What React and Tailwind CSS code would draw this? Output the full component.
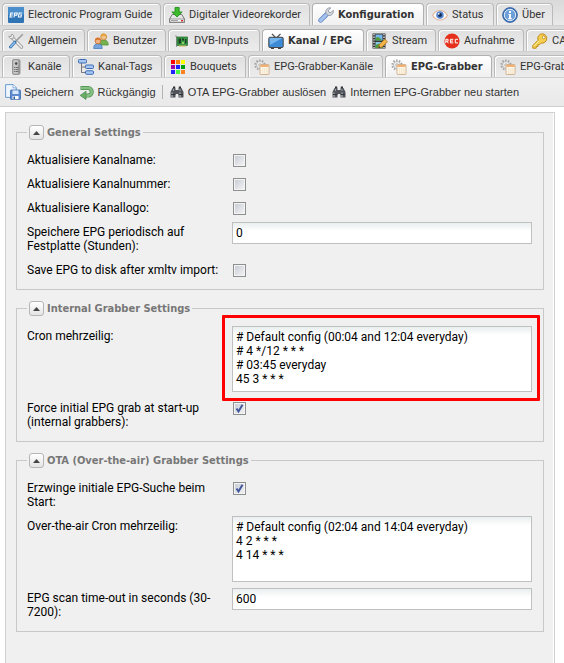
import React from "react";
import clsx from "clsx";

function Icon({ children }) {
  return (
    <svg viewBox="0 0 16 16" className="h-4 w-4 shrink-0" aria-hidden="true">
      {children}
    </svg>
  );
}

function EpgIcon() {
  return (
    <Icon>
      <rect width="16" height="16" rx="1" fill="#2f74b5" />
      <rect width="16" height="8" rx="1" fill="#4a8fcc" />
      <g fill="none" stroke="#fff" strokeWidth="1.1">
        <path d="M5.3 6H2.8L2 10h2.5M2.6 8h2.2" />
        <path d="M6 10.4L6.8 6h2.4l-.4 2.2H6.5" />
        <path d="M14 6h-2.8l-.8 4H13l.4-2h-1.2" />
      </g>
    </Icon>
  );
}

function DriveIcon() {
  return (
    <Icon>
      <path d="M3.2 7.5h9.6l2.7 4.5v3.5H.5V12z" fill="#e6e6e6" stroke="#777" strokeWidth="1" />
      <path d="M.8 12h14.4v3.2H.8z" fill="#f8f8f8" stroke="#777" strokeWidth=".7" />
      <path d="M2 13.6h7" stroke="#999" strokeWidth="1" />
      <rect x="12" y="13" width="2" height="1.4" fill="#d22" />
      <path d="M6 .5h4.2V5h3L8 10 2.8 5H6z" fill="#3dbb2c" stroke="#1c8a18" strokeWidth=".8" />
    </Icon>
  );
}

function WrenchIcon() {
  return (
    <Icon>
      <path d="M2.6 13.4L8.500 7.500" stroke="#5f86c4" strokeWidth="4.600" strokeLinecap="round" />
      <path d="M2.6 13.4L8 8" stroke="#a6c3ee" strokeWidth="3" strokeLinecap="round" />
      <path
        d="M12.9.9a4.2 4.2 0 0 0-5 5.3L10 8.400a4.2 4.2 0 0 0 5.3-5.1l-2.500 2.300-2-.4-.4-2z"
        fill="#d3d7de"
        stroke="#8a93a2"
        strokeWidth=".8"
      />
    </Icon>
  );
}

function EyeIcon() {
  return (
    <Icon>
      <path d="M.5 8.5C3 4 6 3.500 8 3.500s5.200.8 7.500 5C13 12.200 10.500 13 8 13S3 12.200.5 8.500z" fill="#fff" stroke="#e0b49c" strokeWidth="1.2" />
      <circle cx="8" cy="8" r="3.800" fill="#5787d0" />
      <circle cx="8" cy="8" r="1.900" fill="#16284f" />
      <circle cx="6.800" cy="6.800" r=".9" fill="#fff" />
    </Icon>
  );
}

function InfoIcon() {
  return (
    <Icon>
      <circle cx="8" cy="8" r="7.4" fill="#3f74b8" stroke="#2c5e9e" strokeWidth=".8" />
      <circle cx="8" cy="8" r="5.700" fill="#6c9fd8" stroke="#e4effb" strokeWidth="1" />
      <path d="M7 4h2v2H7zM6.500 7H9v4h.8v1.200H6.300V11H7V8.100h-.5z" fill="#fff" />
    </Icon>
  );
}

function ToolsIcon() {
  return (
    <Icon>
      <path d="M13.500 14L4.500 5" stroke="#8e8e8e" strokeWidth="3.200" strokeLinecap="round" />
      <path d="M13.500 14L4.500 5" stroke="#ececec" strokeWidth="1.800" strokeLinecap="round" />
      <path d="M.8 3.200l2.200.3L3.800 1a3 3 0 0 1 1.700 4.300A3 3 0 0 1 .8 3.200z" fill="#e6e6e6" stroke="#949494" strokeWidth=".8" />
      <path d="M14.800 1.200L7 9" stroke="#9a9a9a" strokeWidth="1.500" />
      <path d="M7 9l-4.500 5" stroke="#3976b4" strokeWidth="3" strokeLinecap="round" />
      <path d="M6.500 9.500l-3.800 4.200" stroke="#96c6ed" strokeWidth="1.300" strokeLinecap="round" />
    </Icon>
  );
}

function UsersIcon() {
  return (
    <Icon>
      <path d="M6.500 12c0-4 1.600-5 4.200-5s4.500 1.300 4.500 5z" fill="#75b34c" stroke="#4f8831" strokeWidth=".7" />
      <circle cx="10.700" cy="4" r="3" fill="#f1c088" stroke="#bf7c29" strokeWidth=".7" />
      <path d="M7.600 3.700C7.700.7 9 .4 10.700.4s3 .8 3.100 3.300c-1.500-1.300-4-1.500-6.200 0z" fill="#e2a33c" />
      <path d="M.7 15.500c0-3.500 1.500-4.800 4.200-4.800s4.300 1.300 4.300 4.800z" fill="#77a5df" stroke="#3e71b0" strokeWidth=".7" />
      <circle cx="5" cy="8" r="2.900" fill="#f3b282" stroke="#b95f21" strokeWidth=".7" />
      <path d="M2 7.700C2.100 5.200 3.500 4.600 5 4.600s2.900.8 3 3.100c-1.500-1.200-4-1.300-6 0z" fill="#d9762b" />
    </Icon>
  );
}

function CardIcon() {
  return (
    <Icon>
      <path d="M1 3h1.500v11" fill="none" stroke="#9a9a9a" strokeWidth="1" />
      <rect x="3" y="4" width="10.500" height="8.500" fill="#3a9a45" stroke="#1f6a2c" strokeWidth=".7" />
      <path d="M4.500 5.500H7v5H4.500zM8 5.500h2v2H8zM11 6h1.500v4.500H11z" fill="#1c3f24" />
      <path d="M8 9h2v2H8z" fill="#8cd067" />
      <path d="M5 13h7" stroke="#cfc06a" strokeWidth="1.200" />
    </Icon>
  );
}

function TvIcon() {
  return (
    <Icon>
      <path d="M4 .8l3.500 3.700M12.500.8L9 4.500" stroke="#4b4b4b" strokeWidth="1.200" />
      <rect x=".8" y="4.300" width="14.400" height="10.200" rx="1" fill="#3d8bd6" stroke="#474747" strokeWidth="1" />
      <path d="M1.600 5.100h12.800L2 12z" fill="#76b5ec" />
      <path d="M3 15.500h3M10 15.500h3" stroke="#444" strokeWidth="1" />
    </Icon>
  );
}

function StreamIcon() {
  return (
    <Icon>
      <rect x=".5" y=".5" width="13" height="15" fill="#353535" />
      <path d="M2 1v14M12 1v14" stroke="#eee" strokeWidth="1.300" strokeDasharray="1.300 1.300" />
      <rect x="3.500" y="1.500" width="7" height="6" fill="#75b4e7" />
      <path d="M3.500 7.500V5.200L6 3.700l4.500 3.800z" fill="#4f9c3c" />
      <rect x="3.500" y="9" width="7" height="6" fill="#8cc5ee" />
      <path d="M3.500 15v-3L7 10.500l3.500 2V15z" fill="#4f9c3c" />
      <path d="M6.500 15l.8-3.500 5.500-5.300 2.700 2.600L10 14z" fill="#f2b445" stroke="#a66a18" strokeWidth=".7" />
      <path d="M6.500 15l.5-2 1.400 1.500z" fill="#333" />
    </Icon>
  );
}

function RecIcon() {
  return (
    <Icon>
      <circle cx="8" cy="8" r="7.600" fill="#e5301c" />
      <g fill="none" stroke="#fff" strokeWidth="1">
        <path d="M1.800 10.200V6.300h2.300v1.900H1.800M3 8.200l1.300 2" />
        <path d="M9.300 6.300H6.400v3.600h2.900M6.400 8.100H9" />
        <path d="M14 6.300h-2.700v3.600H14" />
      </g>
    </Icon>
  );
}

function KeyIcon() {
  return (
    <Icon>
      <path
        d="M10.500.8a4.700 4.700 0 0 0-4.400 6.400L.8 12.500v2.700h3.400v-1.800H6v-1.800h1.700l1.500-1.500A4.700 4.700 0 1 0 10.500.8z"
        fill="#f6cf4e"
        stroke="#c18c1c"
        strokeWidth="1"
      />
      <circle cx="11.700" cy="4.300" r="1.400" fill="#fff" stroke="#b98318" strokeWidth=".8" />
      <path d="M2 13l5-5" stroke="#fff0a8" strokeWidth="1" />
    </Icon>
  );
}

function RemoteIcon() {
  return (
    <Icon>
      <rect x="4.500" y=".5" width="7.500" height="15" rx="1.500" fill="#9c9c9c" stroke="#8a8a8a" strokeWidth=".8" />
      <rect x="5.300" y="1.200" width="4.500" height="13.500" fill="#c9c9c9" />
      <circle cx="8.200" cy="4.500" r="1.900" fill="#555" stroke="#eee" strokeWidth=".7" />
      <path d="M6.300 8.500h4M6.300 10.500h4M6.300 12.500h4" stroke="#555" strokeWidth="1" strokeDasharray="1 .5" />
    </Icon>
  );
}

function TagsIcon() {
  return (
    <Icon>
      <path d="M3.500 4v9.500H8M3.500 8H8" fill="none" stroke="#777" strokeWidth="1" />
      <g fill="#a7c7f3" stroke="#3e6cb4" strokeWidth="1">
        <rect x=".5" y=".5" width="8" height="3.500" rx="1" />
        <rect x="7.500" y="6" width="8" height="3.500" rx="1" />
        <rect x="7.500" y="11.800" width="8" height="3.500" rx="1" />
      </g>
    </Icon>
  );
}

function BouquetsIcon() {
  return (
    <Icon>
      <path d="M1 1h4v4H1z" fill="#f00" />
      <path d="M6 1h4v4H6z" fill="#ff8000" />
      <path d="M11 1h4v4h-4z" fill="#ff0" />
      <path d="M1 6h4v4H1z" fill="#a000a8" />
      <path d="M6 6h4v4H6z" fill="#1a22ff" />
      <path d="M11 6h4v4h-4z" fill="#009f10" />
      <path d="M1 11h4v4H1z" fill="#2222ff" />
      <path d="M6 11h4v4H6z" fill="#4bfa3c" />
      <path d="M11 11h4v4h-4z" fill="#ff8020" />
    </Icon>
  );
}

function GrabberIcon() {
  return (
    <Icon>
      <circle cx="6" cy="6" r="4.700" fill="none" stroke="#a0a0a0" strokeWidth="1.800" strokeDasharray="1.500 1.450" />
      <circle cx="6" cy="6" r="3.500" fill="#f4f4f4" stroke="#a8a8a8" strokeWidth=".8" />
      <circle cx="6" cy="6" r="1.300" fill="#fff" stroke="#999" strokeWidth=".7" />
      <rect x="6" y="5.500" width="9" height="10" rx=".6" fill="#fff8ea" stroke="#c9a37e" strokeWidth=".8" />
      <path d="M6.400 5.900h8.200V8H6.400z" fill="#efb176" />
      <path d="M8 10h5.500M8 12h5.500M8 14h5.500" stroke="#e8d5b4" strokeWidth="1" strokeDasharray="1.300 .8" />
    </Icon>
  );
}

function SaveIcon() {
  return (
    <Icon>
      <path d="M.6.6h7.700l3 3v9.800H.6z" fill="#eef5fd" stroke="#6c9bcf" strokeWidth="1" />
      <path d="M8 .6v3.200h3.300" fill="#fff" stroke="#6c9bcf" strokeWidth=".8" />
      <rect x="5.500" y="6" width="10" height="9.500" rx=".7" fill="#5d8ad0" stroke="#3b69ad" strokeWidth=".8" />
      <path d="M7.500 6.400h6v3.600h-6z" fill="#d8e8fa" />
      <path d="M7.500 12h6v3.200h-6z" fill="#fff" />
      <path d="M8.500 12.500H10V15H8.500z" fill="#285597" />
    </Icon>
  );
}

function UndoIcon() {
  return (
    <Icon>
      <path d="M1.500 4H9a3.800 3.800 0 0 1 0 7.600H7" fill="none" stroke="#4b8f4c" strokeWidth="4" />
      <path d="M2 4h7a3.800 3.800 0 0 1 0 7.600H6" fill="none" stroke="#86bf83" strokeWidth="2.600" />
      <path d="M7 7.200v8.300l-5.800-4.100z" fill="#6cad69" stroke="#4b8f4c" strokeWidth=".8" />
    </Icon>
  );
}

function BinocularsIcon() {
  return (
    <Icon>
      <path d="M3.500 4h3v2h3V4h3l2 4v5.500H9.500V10h-3v3.500h-5V8z" fill="#50545a" />
      <path d="M4 3.200h2.200M9.800 3.200H12" stroke="#303338" strokeWidth="1.400" />
      <path d="M3 8.500V13M11 8.500V13" stroke="#b0b5bb" strokeWidth="1.200" />
      <path d="M4.500 5v2M11 5v2" stroke="#9aa0a6" strokeWidth="1" />
      <path d="M2 10.500h4.500M9.500 10.500H14" stroke="#303338" strokeWidth="1" />
    </Icon>
  );
}

const mainTabs = [
  { label: "Electronic Program Guide", icon: EpgIcon, width: "w-[159px]" },
  { label: "Digitaler Videorekorder", icon: DriveIcon, width: "w-[147px]" },
  { label: "Konfiguration", icon: WrenchIcon, width: "w-[112px]", active: true },
  { label: "Status", icon: EyeIcon, width: "w-[68px]" },
  { label: "Über", icon: InfoIcon, width: "w-[57px]" },
];

const configTabs = [
  { label: "Allgemein", icon: ToolsIcon, width: "w-[83px]" },
  { label: "Benutzer", icon: UsersIcon, width: "w-[79px]" },
  { label: "DVB-Inputs", icon: CardIcon, width: "w-[92px]" },
  { label: "Kanal / EPG", icon: TvIcon, width: "w-[102px]", active: true },
  { label: "Stream", icon: StreamIcon, width: "w-[70px]" },
  { label: "Aufnahme", icon: RecIcon, width: "w-[86px]" },
  { label: "CAs", icon: KeyIcon, width: "w-[60px]" },
];

const channelTabs = [
  { label: "Kanäle", icon: RemoteIcon, width: "w-[68px]" },
  { label: "Kanal-Tags", icon: TagsIcon, width: "w-[90px]" },
  { label: "Bouquets", icon: BouquetsIcon, width: "w-[82px]" },
  { label: "EPG-Grabber-Kanäle", icon: GrabberIcon, width: "w-[135px]" },
  { label: "EPG-Grabber", icon: GrabberIcon, width: "w-[107px]", active: true },
  { label: "EPG-Grabber-Module", icon: GrabberIcon, width: "w-[140px]" },
];

function TabRow({ tabs }) {
  return (
    <div
      role="tablist"
      className="flex h-[26px] gap-[2px] overflow-hidden border-b border-[#d0d0d0] bg-linear-to-b from-[#d9d9d9] to-[#e9e9e9] pt-[3px] pl-[2px]"
    >
      {tabs.map(({ label, icon: TabIcon, width, active }) => (
        <button
          key={label}
          type="button"
          role="tab"
          aria-selected={Boolean(active)}
          className={clsx(
            "flex h-[22px] shrink-0 items-center gap-1 rounded-t border border-b-0 pl-[5px] text-[11px] whitespace-nowrap text-[#333] shadow-[inset_1px_1px_0_#fff]",
            width,
            active
              ? "border-[#b0b0b0] bg-linear-to-b from-white to-[#f0f0f0] font-['DejaVu_Sans_Condensed','DejaVu_Sans',sans-serif] font-bold"
              : "border-[#bababa] bg-linear-to-b from-[#e0e0e0] to-[#ececec]"
          )}
        >
          <TabIcon />
          {label}
        </button>
      ))}
    </div>
  );
}

function ToolButton({ icon: ButtonIcon, children }) {
  return (
    <button type="button" className="flex shrink-0 items-center gap-[3px] whitespace-nowrap">
      <ButtonIcon />
      {children}
    </button>
  );
}

function Section({ title, children }) {
  return (
    <fieldset className="min-w-0 border border-[#c8c8c8] pt-[10px] pr-[11px] pb-[10px] pl-[10px]">
      <legend className="flex h-[15px] items-center gap-[3px] px-[2px] font-['DejaVu_Sans_Condensed','DejaVu_Sans',sans-serif] text-[11px] font-bold text-[#777]">
        <button
          type="button"
          aria-label={`Collapse ${title}`}
          className="flex h-[15px] w-[15px] items-center justify-center rounded-[3px] border border-[#b5b5b5] bg-linear-to-b from-white to-[#e4e4e4]"
        >
          <svg viewBox="0 0 7 4" className="h-[4px] w-[7px]" aria-hidden="true">
            <path d="M0 4L3.500 0 7 4z" fill="#444" />
          </svg>
        </button>
        {title}
      </legend>
      <div className="flex flex-col gap-[5px]">{children}</div>
    </fieldset>
  );
}

function Field({ id, label, children }) {
  return (
    <div className="flex items-start">
      <label htmlFor={id} className="w-[205px] shrink-0 pt-[3px] pr-[5px] pb-[2px]">
        {label}
      </label>
      {children}
    </div>
  );
}

function CheckField({ id, label, checked = false }) {
  return (
    <Field id={id} label={label}>
      <span className="relative mt-1 ml-px h-[13px] w-[13px]">
        <input
          id={id}
          type="checkbox"
          defaultChecked={checked}
          className="peer block h-[13px] w-[13px] appearance-none border border-[#8e8f8f] bg-linear-to-br from-[#c5cad3] to-[#f6f6f6] shadow-[inset_0_0_0_1px_#f4f4f4]"
        />
        <svg
          viewBox="0 0 13 13"
          className="pointer-events-none absolute inset-0 hidden h-[13px] w-[13px] peer-checked:block"
          aria-hidden="true"
        >
          <path d="M3.500 6.500l2 3 4-6.700" fill="none" stroke="#42569b" strokeWidth="2" />
        </svg>
      </span>
    </Field>
  );
}

const inputClasses =
  "block w-full rounded-none border border-[#c0c0c0] bg-white bg-linear-to-b from-[#e9eeee] to-white to-[8px] px-[3px] text-black outline-none";

function TextField({ id, label, value }) {
  return (
    <Field id={id} label={label}>
      <input id={id} type="text" defaultValue={value} className={clsx(inputClasses, "h-[22px]")} />
    </Field>
  );
}

function CronField({ id, label, value, highlighted = false }) {
  return (
    <Field id={id} label={label}>
      <div className="relative min-w-0 flex-1 pb-px">
        <textarea
          id={id}
          defaultValue={value}
          className={clsx(inputClasses, "h-[66px] resize-none overflow-hidden py-[3px] leading-[14px]")}
        />
        {highlighted ? (
          <div className="pointer-events-none absolute -top-[11px] -right-[8px] -bottom-[8px] -left-[10px] rounded-[1px] border-3 border-[#ff0000]" />
        ) : null}
      </div>
    </Field>
  );
}

export default function App() {
  return (
    <div className="flex min-h-screen flex-col overflow-hidden bg-white font-[Roboto,'Liberation_Sans',sans-serif] text-xs leading-[14px] text-black">
      <TabRow tabs={mainTabs} />
      <TabRow tabs={configTabs} />
      <TabRow tabs={channelTabs} />

      <div
        role="toolbar"
        className="flex h-[29px] items-center overflow-hidden border-b border-[#d0d0d0] bg-linear-to-b from-[#f0f0f0] to-[#e9e9e9] pl-[5px] font-['Liberation_Sans',Arial,sans-serif] text-[11px] text-[#333]"
      >
        <ToolButton icon={SaveIcon}>Speichern</ToolButton>
        <div className="ml-[5px]">
          <ToolButton icon={UndoIcon}>Rückgängig</ToolButton>
        </div>
        <div className="mx-[6px] h-[14px] w-px bg-[#b4b4b4]" />
        <ToolButton icon={BinocularsIcon}>OTA EPG-Grabber auslösen</ToolButton>
        <div className="ml-[5px]">
          <ToolButton icon={BinocularsIcon}>Internen EPG-Grabber neu starten</ToolButton>
        </div>
      </div>

      <form className="mt-[5px] mr-[9px] ml-[5px] flex flex-1 flex-col gap-[11px] border border-b-0 border-[#d0d0d0] bg-[#f0f0f0] px-[10px] pt-[12px] pb-[10px] shadow-[inset_-1px_0_0_#fff]">
        <Section title="General Settings">
          <CheckField id="channel-name" label="Aktualisiere Kanalname:" />
          <CheckField id="channel-number" label="Aktualisiere Kanalnummer:" />
          <CheckField id="channel-logo" label="Aktualisiere Kanallogo:" />
          <TextField id="save-interval" label="Speichere EPG periodisch auf Festplatte (Stunden):" value="0" />
          <CheckField id="save-after-import" label="Save EPG to disk after xmltv import:" />
        </Section>

        <Section title="Internal Grabber Settings">
          <CronField
            id="cron"
            label="Cron mehrzeilig:"
            value={"# Default config (00:04 and 12:04 everyday)\n# 4 */12 * * *\n# 03:45 everyday\n45 3 * * *"}
            highlighted
          />
          <CheckField id="initial-grab" label="Force initial EPG grab at start-up (internal grabbers):" checked />
        </Section>

        <Section title="OTA (Over-the-air) Grabber Settings">
          <CheckField id="ota-initial" label="Erzwinge initiale EPG-Suche beim Start:" checked />
          <CronField
            id="ota-cron"
            label="Over-the-air Cron mehrzeilig:"
            value={"# Default config (02:04 and 14:04 everyday)\n4 2 * * *\n4 14 * * *"}
          />
          <TextField id="ota-timeout" label="EPG scan time-out in seconds (30-7200):" value="600" />
        </Section>
      </form>
    </div>
  );
}
